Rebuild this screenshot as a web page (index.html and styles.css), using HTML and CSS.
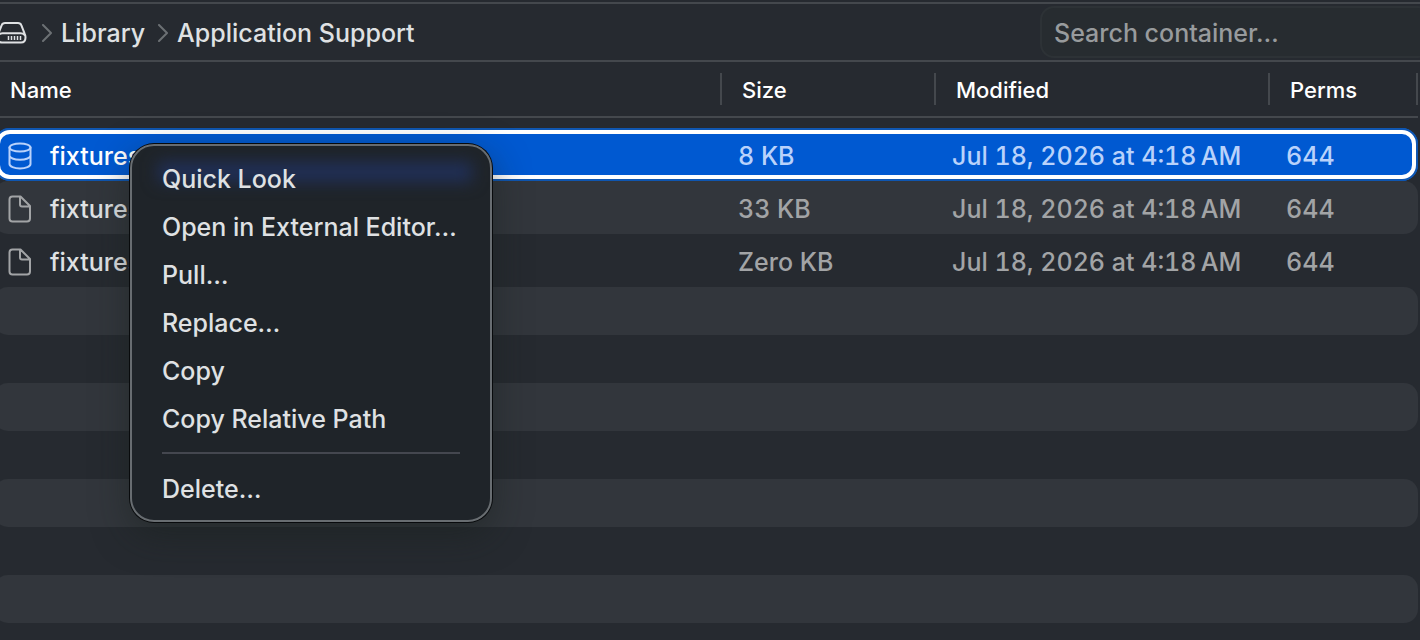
FILE: index.html
```
<!DOCTYPE html>
<html lang="en">
<head>
    <meta charset="UTF-8">
    <title>Application Support</title>
    <link rel="stylesheet" href="styles.css">
</head>
<body>
    <!-- Path Bar -->
    <header class="path-bar">
        <nav class="breadcrumbs">
            <a href="#" class="crumb crumb-root" aria-label="Container">
                <svg class="drive-icon" viewBox="0 0 31 24" width="31" height="24">
                    <path d="M9 2h13q2.500 0 3.300 2.200l3.500 9q.7 1.500.7 3.300 0 5-4.500 5H6q-4.500 0-4.500-5 0-1.800.7-3.300l3.500-9Q6.500 2 9 2z"/>
                    <path d="M2.500 14q1.300-1.700 4-1.700h18q2.700 0 4 1.700"/>
                    <path class="vents" d="M12.500 15v4M15.500 15v4M18.500 15v4M21.500 15v4M24.500 15v4"/>
                </svg>
            </a>
            <svg class="chevron" viewBox="0 0 10 18" width="10" height="18"><path d="M1 1l8 8-8 8"/></svg>
            <a href="#" class="crumb">Library</a>
            <svg class="chevron" viewBox="0 0 10 18" width="10" height="18"><path d="M1 1l8 8-8 8"/></svg>
            <a href="#" class="crumb">Application Support</a>
        </nav>
        <input type="search" class="search" placeholder="Search container…" aria-label="Search container">
    </header>

    <!-- File List -->
    <main class="file-list">
        <table class="files">
            <colgroup>
                <col>
                <col class="col-size">
                <col class="col-modified">
                <col class="col-perms">
            </colgroup>
            <thead>
                <tr>
                    <th scope="col"><div class="head-cell">Name</div></th>
                    <th scope="col"><div class="head-cell">Size</div></th>
                    <th scope="col"><div class="head-cell">Modified</div></th>
                    <th scope="col"><div class="head-cell">Perms</div></th>
                </tr>
            </thead>
            <tbody>
                <tr class="selected">
                    <td>
                        <div class="file-name">
                            <svg class="file-icon" viewBox="0 0 24 28" width="24" height="28">
                                <ellipse cx="12" cy="5.500" rx="10.500" ry="4"/>
                                <path d="M1.500 5.500v16.500c0 2.300 4.500 4.500 10.500 4.500s10.500-2.200 10.500-4.500V5.500M1.500 13.500c0 2.300 4.500 4.300 10.500 4.300s10.500-2 10.500-4.300"/>
                            </svg>
                            <span>fixtures</span>
                        </div>
                    </td>
                    <td>8 KB</td>
                    <td>Jul 18, 2026 at 4:18&#8239;AM</td>
                    <td>644</td>
                </tr>
                <tr class="striped">
                    <td>
                        <div class="file-name">
                            <svg class="file-icon" viewBox="0 0 24 28" width="24" height="28">
                                <path d="M4.500 1.500H12.500L22 11v12.500q0 3-3 3H4.500q-3 0-3-3v-19q0-3 3-3zM12 2v7.500q0 2 2 2h7.500"/>
                            </svg>
                            <span>fixtures</span>
                        </div>
                    </td>
                    <td>33 KB</td>
                    <td>Jul 18, 2026 at 4:18&#8239;AM</td>
                    <td>644</td>
                </tr>
                <tr>
                    <td>
                        <div class="file-name">
                            <svg class="file-icon" viewBox="0 0 24 28" width="24" height="28">
                                <path d="M4.500 1.500H12.500L22 11v12.500q0 3-3 3H4.500q-3 0-3-3v-19q0-3 3-3zM12 2v7.500q0 2 2 2h7.500"/>
                            </svg>
                            <span>fixtures</span>
                        </div>
                    </td>
                    <td>Zero KB</td>
                    <td>Jul 18, 2026 at 4:18&#8239;AM</td>
                    <td>644</td>
                </tr>
            </tbody>
        </table>

        <!-- Empty rows below the files -->
        <div class="filler" aria-hidden="true">
            <div></div><div></div><div></div><div></div>
            <div></div><div></div><div></div><div></div>
        </div>
    </main>

    <!-- Context Menu -->
    <div class="context-menu" role="menu">
        <button role="menuitem">Quick Look</button>
        <button role="menuitem">Open in External Editor…</button>
        <button role="menuitem">Pull…</button>
        <button role="menuitem">Replace…</button>
        <button role="menuitem">Copy</button>
        <button role="menuitem">Copy Relative Path</button>
        <hr>
        <button role="menuitem">Delete…</button>
    </div>
</body>
</html>
```

FILE: styles.css
```
:root {
    --bg-color: #262a30;
    --stripe-bg: #32363c;
    --border-color: #44484d;
    --text-color: #dfe1e3;
    --text-muted: #a2a4a6;
    --selected-bg: #0059d1;
    --selected-ring: #0f56b0;
    --selected-muted: #b9d2fb;
    --menu-bg: #1f2429;
}
* {
    box-sizing: border-box;
}
body {
    margin: 0;
    height: 100vh;
    overflow: hidden;
    padding-top: 2px;
    background-color: var(--bg-color);
    color: var(--text-color);
    font-family: Inter, "Liberation Sans", sans-serif;
    font-size: 25px;
    font-weight: 500;
}

/* --- Path Bar --- */
.path-bar {
    display: flex;
    align-items: center;
    justify-content: space-between;
    height: 60px;
    border-top: 2px solid var(--border-color);
    border-bottom: 2px solid var(--border-color);
}
.breadcrumbs {
    display: flex;
    align-items: center;
    gap: 9px;
    padding-top: 2px;
}
.crumb {
    color: var(--text-color);
    text-decoration: none;
}
.crumb-root {
    display: flex;
    margin-left: -4px;
    margin-right: 6px;
}
.drive-icon,
.chevron,
.file-icon {
    flex-shrink: 0;
    fill: none;
    stroke: currentColor;
    stroke-width: 2;
    stroke-linecap: round;
    stroke-linejoin: round;
}
.drive-icon .vents {
    stroke-width: 1.5;
    stroke-linecap: butt;
}
.chevron {
    color: #6c7074;
}
.crumb ~ .crumb + .chevron {
    margin-left: 4px;
}
.search {
    width: 392px;
    height: 52px;
    margin-right: -12px;
    padding: 2px 12px 0;
    border: 2px solid #2d3236;
    border-radius: 14px;
    background-color: #272c30;
    color: var(--text-color);
    font: inherit;
    outline: none;
}
.search::placeholder {
    color: #989b9d;
    opacity: 1;
}

/* --- File List --- */
.file-list {
    margin: 0 2px 0 -6px;
}
.files {
    width: 100%;
    table-layout: fixed;
    border-collapse: separate;
    border-spacing: 0;
}
.col-size { width: 214px; }
.col-modified { width: 334px; }
.col-perms { width: 148px; }
.files th {
    height: 56px;
    padding: 0;
    border-bottom: 2px solid var(--border-color);
    color: #fff;
    font-size: 22px;
    font-weight: 500;
    text-align: left;
}
.head-cell {
    padding: 2px 0 0 20px;
    border-right: 2px solid var(--border-color);
    line-height: 30px;
}
.files th:first-child .head-cell {
    padding-left: 16px;
}
/* Gap between the header and the first row */
.files tbody::before {
    content: "";
    display: block;
    height: 10px;
}
.files td {
    height: 53px;
    padding: 2px 0 0 16px;
    color: var(--text-muted);
    font-variant-numeric: tabular-nums;
    white-space: nowrap;
}
.files td:first-child {
    color: var(--text-color);
    padding-left: 14px;
}
.file-name {
    display: flex;
    align-items: center;
    gap: 18px;
}
.file-icon {
    color: var(--text-muted);
}
.striped td {
    background-color: var(--stripe-bg);
}
.striped td:first-child {
    border-radius: 14px 0 0 14px;
}
.striped td:last-child {
    border-radius: 0 14px 14px 0;
}
.selected {
    position: relative;
}
.selected td {
    background-color: var(--selected-bg);
    color: var(--selected-muted);
}
.selected td:first-child {
    border-radius: 16px 0 0 16px;
    color: #fff;
}
.selected td:last-child {
    border-radius: 0 16px 16px 0;
}
.selected .file-icon {
    color: var(--selected-muted);
}
/* Focus ring around the whole selected row */
.selected td:first-child::after {
    content: "";
    position: absolute;
    inset: 2px;
    border: 4px solid #fff;
    border-radius: 14px;
    box-shadow: 0 0 0 2px var(--selected-ring);
}
.filler div {
    height: 48px;
    border-radius: 14px;
}
.filler div:nth-child(odd) {
    background-color: var(--stripe-bg);
}

/* --- Context Menu --- */
.context-menu {
    position: absolute;
    left: 130px;
    top: 144px;
    width: 362px;
    padding: 9px 0 7px;
    border: 2px solid #686d71;
    border-radius: 24px;
    background-color: var(--menu-bg);
    box-shadow: 0 0 0 1px #080a0c, 0 12px 36px rgba(24, 32, 28, 0.5);
}
.context-menu::before {
    content: "";
    position: absolute;
    left: 26px;
    right: 18px;
    top: 16px;
    height: 20px;
    background-color: #202f58;
    filter: blur(8px);
}
.context-menu button {
    display: block;
    position: relative;
    width: 100%;
    height: 48px;
    padding: 0 30px;
    border: none;
    background: none;
    color: var(--text-color);
    font: inherit;
    text-align: left;
    white-space: nowrap;
}
.context-menu hr {
    height: 2px;
    margin: 9px 30px 11px;
    border: none;
    background-color: #44474f;
}
```
